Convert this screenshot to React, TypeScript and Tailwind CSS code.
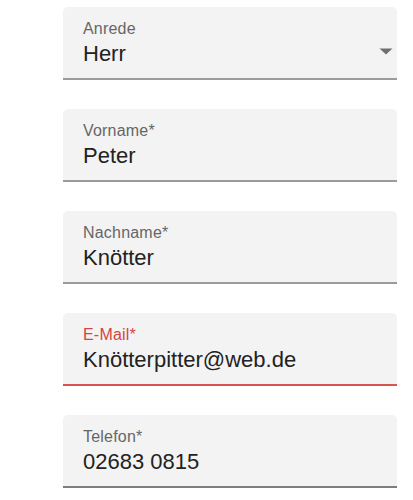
import React from "react";

type FieldProps = { label: string; value: string; error?: boolean; select?: boolean; line?: string };

function Field({ label, value, error, select, line }: FieldProps) {
  return (
    <div
      className={`relative h-[73px] bg-[#f3f3f3] rounded-t-[5px] border-b-2 pl-[20px] pt-[12px] ${
        error ? "border-[#d9534f]" : line ?? "border-[#9b9b9b]"
      }`}
    >
      <div
        className={`text-[16px] leading-[19px] tracking-[0.2px] ${error ? "text-[#d64545]" : "text-[#666666]"}`}
      >
        {label}
      </div>
      <div className="mt-[2px] text-[22px] leading-[28px] text-[#222222]">{value}</div>
      {select && (
        <svg className="absolute right-[3px] top-[40px]" width="16" height="9" viewBox="0 0 16 9">
          <path d="M1.5 1.5 L14.5 1.5 L8 7.5 Z" fill="#6f6f6f" />
        </svg>
      )}
    </div>
  );
}

export default function App() {
  return (
    <div
      className="w-[413px] h-[500px] bg-white pt-[7px] pl-[63px] pr-[16px] flex flex-col gap-[29px]"
      style={{ fontFamily: '"Liberation Sans", Arial, sans-serif' }}
    >
      <Field label="Anrede" value="Herr" select />
      <Field label="Vorname*" value="Peter" />
      <Field label="Nachname*" value="Knötter" />
      <Field label="E-Mail*" value="Knötterpitter@web.de" error />
      <Field label="Telefon*" value="02683 0815" line="border-[#7d7d7d]" />
    </div>
  );
}
